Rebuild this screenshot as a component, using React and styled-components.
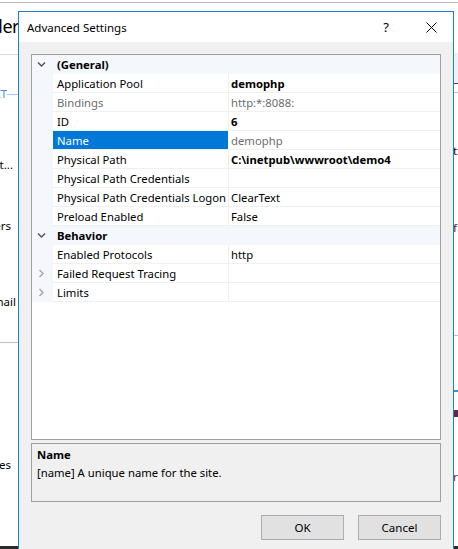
import React from 'react';
import styled, { createGlobalStyle } from 'styled-components';

const GlobalStyle = createGlobalStyle`
  html, body {
    margin: 0;
    padding: 0;
    background: #ffffff;
  }
  body {
    font-family: "Noto Sans", "Open Sans", sans-serif;
    font-size: 11.3px;
    color: #000;
  }
`;

const Screen = styled.div`
  position: relative;
  width: 458px;
  height: 549px;
  overflow: hidden;
  background: #ffffff;
  display: flex;
  flex-direction: column;
`;

const Backdrop = styled.div`
  flex: 1;
  display: flex;
  border-top: 1px solid #b9b9b9;
  margin-top: 2px;
`;

const LeftPane = styled.div`
  width: 18px;
  overflow: hidden;
  display: flex;
  flex-direction: column;
  white-space: nowrap;
`;

const Spacer = styled.div`
  height: ${(p) => p.h}px;
  width: ${(p) => (p.w ? `${p.w}px` : 'auto')};
  flex-shrink: 0;
`;

const BigText = styled.div`
  height: ${(p) => p.h}px;
  font-size: 18px;
  line-height: ${(p) => p.h}px;
  display: flex;
  justify-content: flex-end;
  margin-right: -1px;
  letter-spacing: -0.5px;
`;

const PaneText = styled.div`
  height: 16px;
  line-height: 16px;
  font-size: 11.5px;
  color: ${(p) => p.color || '#000'};
  display: flex;
  justify-content: ${(p) => (p.end ? 'flex-end' : 'flex-start')};
  padding-right: ${(p) => p.pr || 0}px;
  flex-shrink: 0;
  overflow: hidden;
`;

const Rule = styled.div`
  height: 1px;
  flex-shrink: 0;
  background: ${(p) => p.color};
`;

const TabLine = styled.div`
  display: flex;
  align-items: center;
  height: 10px;
  flex-shrink: 0;
`;

const TabText = styled.span`
  color: #3d8fdc;
  font-size: 11px;
  width: 7px;
  overflow: hidden;
  line-height: 10px;
  display: flex;
  justify-content: flex-end;
`;

const TabRule = styled.div`
  flex: 1;
  height: 1px;
  background: #a8c4e6;
`;

const MidPane = styled.div`
  flex: 1;
`;

const RightPane = styled.div`
  width: 5px;
  display: flex;
  flex-direction: column;
  overflow: hidden;
  white-space: nowrap;
`;

const Shade = styled.div`
  height: ${(p) => p.h}px;
  flex-shrink: 0;
  background: ${(p) => p.color};
`;

const TaskBar = styled.div`
  height: 3px;
  background: #2b2b2b;
  flex-shrink: 0;
`;

const Dialog = styled.div`
  position: absolute;
  left: 18px;
  top: 11px;
  width: 436px;
  height: 545px;
  box-sizing: border-box;
  border: 1px solid #1c7fd6;
  background: #f0f0f0;
  display: flex;
  flex-direction: column;
`;

const TitleBar = styled.div`
  height: 30px;
  background: #ffffff;
  display: flex;
  align-items: center;
  padding-left: 8px;
  flex-shrink: 0;
`;

const Title = styled.span`
  flex: 1;
  font-size: 11.5px;
  color: #000;
`;

const TitleButton = styled.div`
  width: ${(p) => p.w}px;
  height: 30px;
  display: flex;
  align-items: center;
  justify-content: center;
  font-size: 13px;
`;

const Body = styled.div`
  padding: 12px;
  display: flex;
  flex-direction: column;
`;

const Grid = styled.div`
  height: 386px;
  box-sizing: border-box;
  border: 1px solid #a0a0a0;
  background: #ffffff;
  overflow: hidden;
`;

const Row = styled.div`
  display: grid;
  grid-template-columns: 21px 176px 1fr;
  height: 19px;
  background: ${(p) => (p.category ? '#f4f7fc' : '#ffffff')};
`;

const Gutter = styled.div`
  background: #f4f7fc;
  display: flex;
  align-items: center;
  justify-content: center;
  padding-right: 2px;
`;

const Label = styled.div`
  box-sizing: border-box;
  padding-left: 4px;
  padding-top: 1px;
  line-height: 18px;
  white-space: nowrap;
  overflow: hidden;
  font-weight: ${(p) => (p.category ? 700 : 400)};
  border-bottom: 1px solid ${(p) => (p.category ? 'transparent' : '#f0f0f0')};
  border-right: 1px solid ${(p) => (p.category ? 'transparent' : '#f0f0f0')};
  color: ${(p) => (p.selected ? '#ffffff' : p.muted ? '#6d6d6d' : '#000')};
  background: ${(p) => (p.selected ? '#0078d7' : 'transparent')};
  ${(p) => p.selected && 'border-right-color: #ffffff;'}
`;

const Value = styled.div`
  box-sizing: border-box;
  padding-left: 2px;
  padding-top: 1px;
  line-height: 18px;
  white-space: nowrap;
  overflow: hidden;
  font-weight: ${(p) => (p.bold ? 700 : 400)};
  color: ${(p) => (p.muted ? '#6d6d6d' : '#000')};
  border-bottom: 1px solid ${(p) => (p.category ? 'transparent' : '#f0f0f0')};
`;

const Description = styled.div`
  margin-top: 3px;
  height: 59px;
  box-sizing: border-box;
  border: 1px solid #a0a0a0;
  padding: 2px 5px;
  display: flex;
  flex-direction: column;
`;

const DescTitle = styled.div`
  font-weight: 700;
  line-height: 18px;
`;

const DescText = styled.div`
  line-height: 18px;
`;

const Buttons = styled.div`
  margin-top: 13px;
  display: flex;
  justify-content: flex-end;
  gap: 14px;
`;

const Button = styled.button`
  width: 83px;
  height: 25px;
  box-sizing: border-box;
  border: 1px solid #adadad;
  background: #e1e1e1;
  font-family: "Noto Sans", "Open Sans", sans-serif;
  font-size: 11.5px;
  color: #000;
  padding: 0;
`;

const Chevron = ({ open }) => (
  <svg width="9" height="9" viewBox="0 0 9 9">
    {open ? (
      <path d="M1 2.5 L4.5 6 L8 2.5" fill="none" stroke="#505050" strokeWidth="1.4" />
    ) : (
      <path d="M2.5 1 L6 4.5 L2.5 8" fill="none" stroke="#a6a6a6" strokeWidth="1.4" />
    )}
  </svg>
);

const CloseIcon = () => (
  <svg width="11" height="11" viewBox="0 0 11 11">
    <path d="M0.5 0.5 L10.5 10.5 M10.5 0.5 L0.5 10.5" stroke="#000" strokeWidth="1" />
  </svg>
);

const rows = [
  { type: 'cat', label: '(General)' },
  { label: 'Application Pool', value: 'demophp', bold: true },
  { label: 'Bindings', value: 'http:*:8088:', muted: true },
  { label: 'ID', value: '6', bold: true },
  { label: 'Name', value: 'demophp', selected: true, valueMuted: true },
  { label: 'Physical Path', value: 'C:\\inetpub\\wwwroot\\demo4', bold: true },
  { label: 'Physical Path Credentials', value: '' },
  { label: 'Physical Path Credentials Logon', value: 'ClearText' },
  { label: 'Preload Enabled', value: 'False' },
  { type: 'cat', label: 'Behavior' },
  { label: 'Enabled Protocols', value: 'http' },
  { label: 'Failed Request Tracing', value: '', collapsed: true },
  { label: 'Limits', value: '', collapsed: true },
];

export default function App() {
  return (
    <>
      <GlobalStyle />
      <Screen>
        <Backdrop>
          <LeftPane>
            <Spacer h={9} />
            <BigText h={28}>
              <span>Header</span>
            </BigText>
            <Spacer h={14} />
            <Rule color="#dadada" />
            <Spacer h={34} />
            <TabLine>
              <TabText>
                <span>IT</span>
              </TabText>
              <TabRule />
            </TabLine>
            <Spacer h={58} />
            <PaneText end pr={5}>
              <span>Edit...</span>
            </PaneText>
            <Spacer h={45} />
            <PaneText end pr={7}>
              <span>Handlers</span>
            </PaneText>
            <Spacer h={60} />
            <PaneText end pr={2}>
              <span>Thumbnail</span>
            </PaneText>
            <Spacer h={32} />
            <Rule color="#b4c2d6" />
            <Spacer h={114} />
            <PaneText end pr={7}>
              <span>Properties</span>
            </PaneText>
          </LeftPane>
          <MidPane />
          <RightPane>
            <Spacer h={50} />
            <Shade h={30} color="#eef1f5" />
            <Shade h={1} color="#3c4660" />
            <Spacer h={8} />
            <Rule color="#a8c4e6" />
            <Spacer h={50} />
            <PaneText>t</PaneText>
            <Spacer h={61} />
            <PaneText color="#4a2030">f</PaneText>
            <Spacer h={99} />
            <Rule color="#b4c2d6" />
            <Spacer h={54} />
            <Shade h={2} color="#3d8fdc" />
            <Spacer h={18} />
            <Shade h={7} color="#5a2a4a" />
            <Spacer h={52} />
            <PaneText color="#7a2030">r</PaneText>
          </RightPane>
        </Backdrop>
        <TaskBar />

        <Dialog>
          <TitleBar>
            <Title>Advanced Settings</Title>
            <TitleButton w={30}>?</TitleButton>
            <Spacer h={0} w={8} />
            <TitleButton w={44}>
              <CloseIcon />
            </TitleButton>
          </TitleBar>
          <Body>
            <Grid>
              {rows.map((r) =>
                r.type === 'cat' ? (
                  <Row key={r.label} category>
                    <Gutter>
                      <Chevron open />
                    </Gutter>
                    <Label category>{r.label}</Label>
                    <Value category />
                  </Row>
                ) : (
                  <Row key={r.label}>
                    <Gutter>{r.collapsed && <Chevron />}</Gutter>
                    <Label muted={r.muted} selected={r.selected}>
                      {r.label}
                    </Label>
                    <Value bold={r.bold} muted={r.muted || r.valueMuted}>
                      {r.value}
                    </Value>
                  </Row>
                )
              )}
            </Grid>
            <Description>
              <DescTitle>Name</DescTitle>
              <DescText>[name] A unique name for the site.</DescText>
            </Description>
            <Buttons>
              <Button>OK</Button>
              <Button>Cancel</Button>
            </Buttons>
          </Body>
        </Dialog>
      </Screen>
    </>
  );
}
